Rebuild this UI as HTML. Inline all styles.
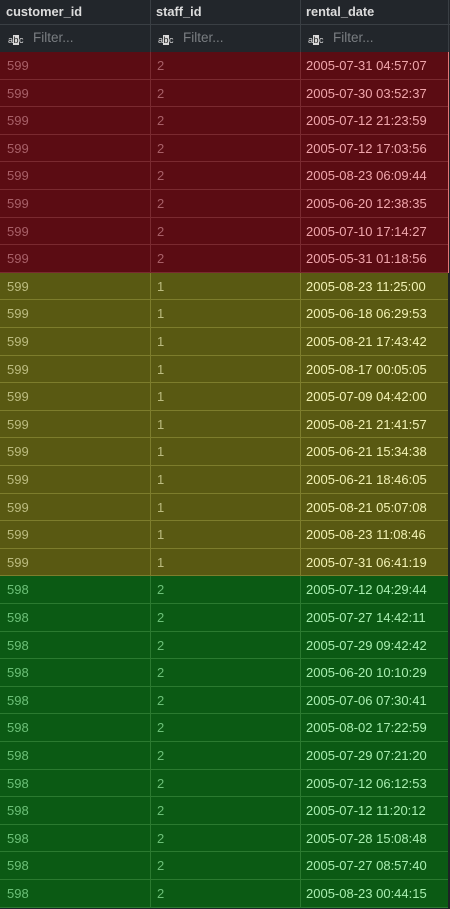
<!DOCTYPE html>
<html><head><meta charset="utf-8"><style>
*{margin:0;padding:0;box-sizing:border-box}
body{width:450px;height:909px;overflow:hidden;background:#1e2226;font-family:"Liberation Sans",sans-serif;position:relative}
.hdr{position:absolute;left:0;top:0;width:450px;height:25px;background:#22262b;border-bottom:1px solid #3a3f44}
.flt{position:absolute;left:0;top:25px;width:450px;height:27px;background:#22262b}
.c{position:absolute;top:0;height:100%;border-right:1px solid #3a3f44}
.hdr span{position:absolute;top:4px;font-weight:bold;font-size:12.8px;color:#dcdcdc}
.flt span.f{position:absolute;top:5px;font-size:13.5px;color:#7a7e82}
.ic{position:absolute;top:10px;font-size:9px;color:#ddd;letter-spacing:-0.5px}
.ic b{background:#d8d8d8;color:#222;font-weight:normal;padding:0 1px}
.row{position:absolute;left:0;width:448px;height:27.6px;font-size:13px;border-bottom:1px solid}
.row span{position:absolute;top:6px}
.r{background:#5b0c13;border-color:#7a2a30;color:#a86068}
.r .d{color:#f0a6ac}
.y{background:#595912;border-color:#7d7d2c;color:#bcbc80}
.y .d{color:#f2f2b4}
.g{background:#0b5a14;border-color:#2b7a30;color:#6cc078}
.g .d{color:#a8eeb0}
.row .v1,.row .v2{position:absolute;top:0;height:100%;width:1px}
.r .v1,.r .v2{background:#7a2a30}.y .v1,.y .v2{background:#7d7d2c}.g .v1,.g .v2{background:#2b7a30}
</style></head><body>
<div class="hdr"><div class="c" style="left:0;width:151px"></div><div class="c" style="left:151px;width:150px"></div><div class="c" style="left:301px;width:148px"></div>
<span style="left:6px">customer_id</span><span style="left:156px">staff_id</span><span style="left:306px">rental_date</span></div>
<div class="flt"><div class="c" style="left:0;width:151px"></div><div class="c" style="left:151px;width:150px"></div><div class="c" style="left:301px;width:148px"></div>
<span class="ic" style="left:8px">a<b>b</b>c</span><span class="f" style="left:33px">Filter...</span>
<span class="ic" style="left:158px">a<b>b</b>c</span><span class="f" style="left:183px">Filter...</span>
<span class="ic" style="left:308px">a<b>b</b>c</span><span class="f" style="left:333px">Filter...</span></div>
<div style="position:absolute;left:448px;top:52px;width:1px;height:221px;background:#e07878"></div>

<div class="row r" style="top:52px"><i class="v1" style="left:150px"></i><i class="v2" style="left:300px"></i><span style="left:7px">599</span><span style="left:157px">2</span><span class="d" style="left:306px">2005-07-31 04:57:07</span></div>
<div class="row r" style="top:79.6px"><i class="v1" style="left:150px"></i><i class="v2" style="left:300px"></i><span style="left:7px">599</span><span style="left:157px">2</span><span class="d" style="left:306px">2005-07-30 03:52:37</span></div>
<div class="row r" style="top:107.2px"><i class="v1" style="left:150px"></i><i class="v2" style="left:300px"></i><span style="left:7px">599</span><span style="left:157px">2</span><span class="d" style="left:306px">2005-07-12 21:23:59</span></div>
<div class="row r" style="top:134.8px"><i class="v1" style="left:150px"></i><i class="v2" style="left:300px"></i><span style="left:7px">599</span><span style="left:157px">2</span><span class="d" style="left:306px">2005-07-12 17:03:56</span></div>
<div class="row r" style="top:162.4px"><i class="v1" style="left:150px"></i><i class="v2" style="left:300px"></i><span style="left:7px">599</span><span style="left:157px">2</span><span class="d" style="left:306px">2005-08-23 06:09:44</span></div>
<div class="row r" style="top:190px"><i class="v1" style="left:150px"></i><i class="v2" style="left:300px"></i><span style="left:7px">599</span><span style="left:157px">2</span><span class="d" style="left:306px">2005-06-20 12:38:35</span></div>
<div class="row r" style="top:217.6px"><i class="v1" style="left:150px"></i><i class="v2" style="left:300px"></i><span style="left:7px">599</span><span style="left:157px">2</span><span class="d" style="left:306px">2005-07-10 17:14:27</span></div>
<div class="row r" style="top:245.2px"><i class="v1" style="left:150px"></i><i class="v2" style="left:300px"></i><span style="left:7px">599</span><span style="left:157px">2</span><span class="d" style="left:306px">2005-05-31 01:18:56</span></div>

<div class="row y" style="top:272.8px"><i class="v1" style="left:150px"></i><i class="v2" style="left:300px"></i><span style="left:7px">599</span><span style="left:157px">1</span><span class="d" style="left:306px">2005-08-23 11:25:00</span></div>
<div class="row y" style="top:300.4px"><i class="v1" style="left:150px"></i><i class="v2" style="left:300px"></i><span style="left:7px">599</span><span style="left:157px">1</span><span class="d" style="left:306px">2005-06-18 06:29:53</span></div>
<div class="row y" style="top:328px"><i class="v1" style="left:150px"></i><i class="v2" style="left:300px"></i><span style="left:7px">599</span><span style="left:157px">1</span><span class="d" style="left:306px">2005-08-21 17:43:42</span></div>
<div class="row y" style="top:355.6px"><i class="v1" style="left:150px"></i><i class="v2" style="left:300px"></i><span style="left:7px">599</span><span style="left:157px">1</span><span class="d" style="left:306px">2005-08-17 00:05:05</span></div>
<div class="row y" style="top:383.2px"><i class="v1" style="left:150px"></i><i class="v2" style="left:300px"></i><span style="left:7px">599</span><span style="left:157px">1</span><span class="d" style="left:306px">2005-07-09 04:42:00</span></div>
<div class="row y" style="top:410.8px"><i class="v1" style="left:150px"></i><i class="v2" style="left:300px"></i><span style="left:7px">599</span><span style="left:157px">1</span><span class="d" style="left:306px">2005-08-21 21:41:57</span></div>
<div class="row y" style="top:438.4px"><i class="v1" style="left:150px"></i><i class="v2" style="left:300px"></i><span style="left:7px">599</span><span style="left:157px">1</span><span class="d" style="left:306px">2005-06-21 15:34:38</span></div>
<div class="row y" style="top:466px"><i class="v1" style="left:150px"></i><i class="v2" style="left:300px"></i><span style="left:7px">599</span><span style="left:157px">1</span><span class="d" style="left:306px">2005-06-21 18:46:05</span></div>
<div class="row y" style="top:493.6px"><i class="v1" style="left:150px"></i><i class="v2" style="left:300px"></i><span style="left:7px">599</span><span style="left:157px">1</span><span class="d" style="left:306px">2005-08-21 05:07:08</span></div>
<div class="row y" style="top:521.2px"><i class="v1" style="left:150px"></i><i class="v2" style="left:300px"></i><span style="left:7px">599</span><span style="left:157px">1</span><span class="d" style="left:306px">2005-08-23 11:08:46</span></div>
<div class="row y" style="top:548.8px"><i class="v1" style="left:150px"></i><i class="v2" style="left:300px"></i><span style="left:7px">599</span><span style="left:157px">1</span><span class="d" style="left:306px">2005-07-31 06:41:19</span></div>

<div class="row g" style="top:576.4px"><i class="v1" style="left:150px"></i><i class="v2" style="left:300px"></i><span style="left:7px">598</span><span style="left:157px">2</span><span class="d" style="left:306px">2005-07-12 04:29:44</span></div>
<div class="row g" style="top:604px"><i class="v1" style="left:150px"></i><i class="v2" style="left:300px"></i><span style="left:7px">598</span><span style="left:157px">2</span><span class="d" style="left:306px">2005-07-27 14:42:11</span></div>
<div class="row g" style="top:631.6px"><i class="v1" style="left:150px"></i><i class="v2" style="left:300px"></i><span style="left:7px">598</span><span style="left:157px">2</span><span class="d" style="left:306px">2005-07-29 09:42:42</span></div>
<div class="row g" style="top:659.2px"><i class="v1" style="left:150px"></i><i class="v2" style="left:300px"></i><span style="left:7px">598</span><span style="left:157px">2</span><span class="d" style="left:306px">2005-06-20 10:10:29</span></div>
<div class="row g" style="top:686.8px"><i class="v1" style="left:150px"></i><i class="v2" style="left:300px"></i><span style="left:7px">598</span><span style="left:157px">2</span><span class="d" style="left:306px">2005-07-06 07:30:41</span></div>
<div class="row g" style="top:714.4px"><i class="v1" style="left:150px"></i><i class="v2" style="left:300px"></i><span style="left:7px">598</span><span style="left:157px">2</span><span class="d" style="left:306px">2005-08-02 17:22:59</span></div>
<div class="row g" style="top:742px"><i class="v1" style="left:150px"></i><i class="v2" style="left:300px"></i><span style="left:7px">598</span><span style="left:157px">2</span><span class="d" style="left:306px">2005-07-29 07:21:20</span></div>
<div class="row g" style="top:769.6px"><i class="v1" style="left:150px"></i><i class="v2" style="left:300px"></i><span style="left:7px">598</span><span style="left:157px">2</span><span class="d" style="left:306px">2005-07-12 06:12:53</span></div>
<div class="row g" style="top:797.2px"><i class="v1" style="left:150px"></i><i class="v2" style="left:300px"></i><span style="left:7px">598</span><span style="left:157px">2</span><span class="d" style="left:306px">2005-07-12 11:20:12</span></div>
<div class="row g" style="top:824.8px"><i class="v1" style="left:150px"></i><i class="v2" style="left:300px"></i><span style="left:7px">598</span><span style="left:157px">2</span><span class="d" style="left:306px">2005-07-28 15:08:48</span></div>
<div class="row g" style="top:852.4px"><i class="v1" style="left:150px"></i><i class="v2" style="left:300px"></i><span style="left:7px">598</span><span style="left:157px">2</span><span class="d" style="left:306px">2005-07-27 08:57:40</span></div>
<div class="row g" style="top:880px"><i class="v1" style="left:150px"></i><i class="v2" style="left:300px"></i><span style="left:7px">598</span><span style="left:157px">2</span><span class="d" style="left:306px">2005-08-23 00:44:15</span></div>
</body></html>
